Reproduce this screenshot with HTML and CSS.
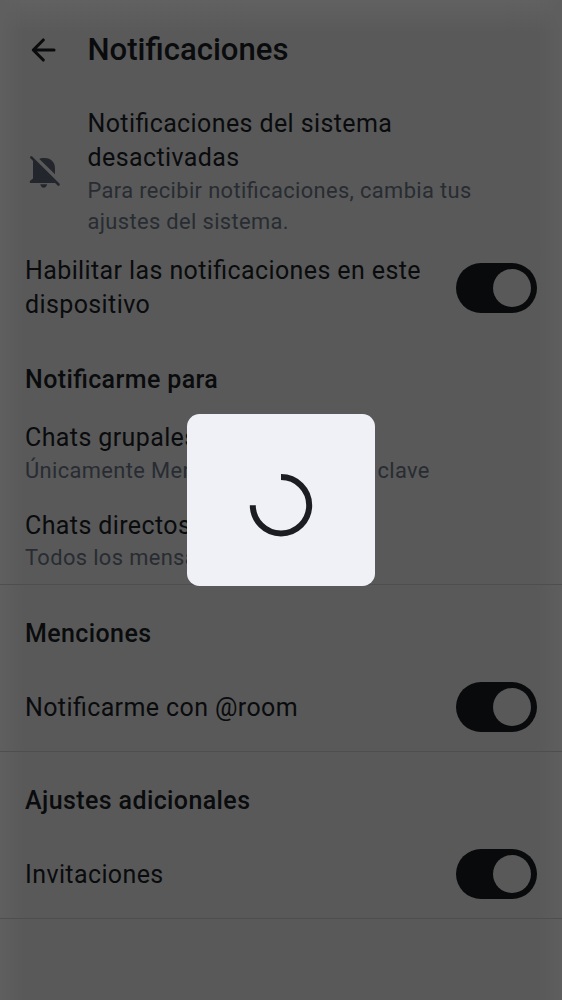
FILE: index.html
```html
<!DOCTYPE html>
<html lang="es">
<head>
<meta charset="utf-8">
<meta name="viewport" content="width=device-width, initial-scale=1">
<title>Notificaciones</title>
<link rel="stylesheet" href="styles.css">
</head>
<body>
<main class="screen">
  <header class="topbar">
    <svg class="back" viewBox="0 0 38 38" aria-hidden="true"><path d="M18.300 9 8.300 19l10 10M8.800 19H29" fill="none" stroke="currentColor" stroke-width="3.100" stroke-linecap="round" stroke-linejoin="round"/></svg>
    <h1 class="title">Notificaciones</h1>
  </header>

  <section class="notice">
    <svg class="bell" viewBox="0 0 34 34" aria-hidden="true">
      <path d="M12.300 4Q13.500 3 15.500 3H18C24 3 28 7.500 28 13v6.200ZM6 4.500 29 28H4.500a1.300 1.300 0 0 1-1.300-2.200L6 23.500ZM13.300 29.300h6.800c-.5 2-1.600 3.400-3.400 3.400s-2.900-1.400-3.400-3.400Z" fill="currentColor"/>
      <path d="m4.300 2.300 27.200 27.200" stroke="currentColor" stroke-width="2.600" stroke-linecap="round"/>
    </svg>
    <div class="notice-text">
      <p class="label">Notificaciones del sistema<br>desactivadas</p>
      <p class="hint">Para recibir notificaciones, cambia tus<br>ajustes del sistema.</p>
    </div>
  </section>

  <section class="row row-device">
    <p class="label">Habilitar las notificaciones en este dispositivo</p>
    <span class="switch" role="switch" aria-checked="true"></span>
  </section>

  <section class="group group-chats">
    <h2 class="heading">Notificarme para</h2>
    <div class="item">
      <p class="label">Chats grupales</p>
      <p class="hint">Únicamente Menciones y Palabras clave</p>
    </div>
    <div class="item">
      <p class="label">Chats directos</p>
      <p class="hint">Todos los mensajes</p>
    </div>
  </section>

  <section class="group">
    <h2 class="heading">Menciones</h2>
    <div class="row">
      <p class="label">Notificarme con @room</p>
      <span class="switch" role="switch" aria-checked="true"></span>
    </div>
  </section>

  <section class="group">
    <h2 class="heading">Ajustes adicionales</h2>
    <div class="row">
      <p class="label">Invitaciones</p>
      <span class="switch" role="switch" aria-checked="true"></span>
    </div>
  </section>
</main>

<div class="overlay">
  <div class="dialog">
    <svg class="spinner" viewBox="0 0 64 64" role="progressbar"><path d="M32 4a28.200 28.200 0 1 1-28.200 28.200" fill="none" stroke="currentColor" stroke-width="6"/></svg>
  </div>
</div>
</body>
</html>
```

FILE: styles.css
```css
* {
  box-sizing: border-box;
}

body {
  margin: 0;
  font-family: Roboto, "Noto Sans", sans-serif;
  color: #0a0b0d;
  background: #595959;
}

h1, h2, p {
  margin: 0;
}

.screen {
  display: flex;
  flex-direction: column;
  height: 1000px;
  overflow: hidden;
  background:
    linear-gradient(to right, #5f5f5f, rgba(89, 89, 89, 0) 24px),
    linear-gradient(to left, #5e5e5e, rgba(89, 89, 89, 0) 24px),
    linear-gradient(to bottom, #616161, rgba(89, 89, 89, 0) 32px),
    #595959;
}

.topbar {
  display: flex;
  align-items: center;
  gap: 24.500px;
  height: 100px;
  padding-left: 25px;
}

.back {
  width: 38px;
  height: 38px;
}

.title {
  font-size: 31.1px;
  font-weight: 500;
  line-height: 44px;
}

.notice {
  display: flex;
  align-items: center;
  gap: 24.500px;
  height: 144px;
  padding: 0 25px;
}

.bell {
  width: 34px;
  height: 34px;
  margin: 0 2px;
  color: #23272d;
}

.label,
.heading {
  font-size: 25px;
  line-height: 34.3px;
  letter-spacing: 0.39px;
  font-feature-settings: "liga" 1;
}

.label {
  font-weight: 400;
}

.heading {
  font-weight: 500;
}

.hint {
  color: #282c32;
  font-size: 21.86px;
  line-height: 31.2px;
  letter-spacing: 0.37px;
  font-feature-settings: "liga" 1;
  white-space: nowrap;
}

.row {
  display: flex;
  align-items: center;
  justify-content: space-between;
  gap: 25px;
  height: 88px;
  padding: 0 25px;
}

.row .label {
  padding-top: 1px;
}

.row-device {
  height: 87px;
}

.switch {
  display: flex;
  flex: none;
  align-items: center;
  justify-content: flex-end;
  width: 81px;
  height: 50px;
  padding-right: 6px;
  border-radius: 25px;
  background: #090a0c;
}

.switch::after {
  content: "";
  width: 38px;
  height: 38px;
  border-radius: 50%;
  background: #595959;
}

.group {
  height: 167px;
  border-bottom: 1px solid #4e4e4f;
}

.group .heading {
  padding: 32px 25px 12px;
}

.group-chats {
  height: 254px;
}

.item {
  height: 87.500px;
  padding: 12px 25px 0;
}

.item .hint {
  margin-top: -0.700px;
}

.overlay {
  position: absolute;
  inset: 0;
  display: flex;
  align-items: center;
  justify-content: center;
}

.dialog {
  display: flex;
  align-items: center;
  justify-content: center;
  width: 188px;
  height: 172px;
  padding-top: 9px;
  border-radius: 12.500px;
  background: #f0f1f6;
}

.spinner {
  width: 64px;
  height: 64px;
  color: #1b1d22;
}
```
